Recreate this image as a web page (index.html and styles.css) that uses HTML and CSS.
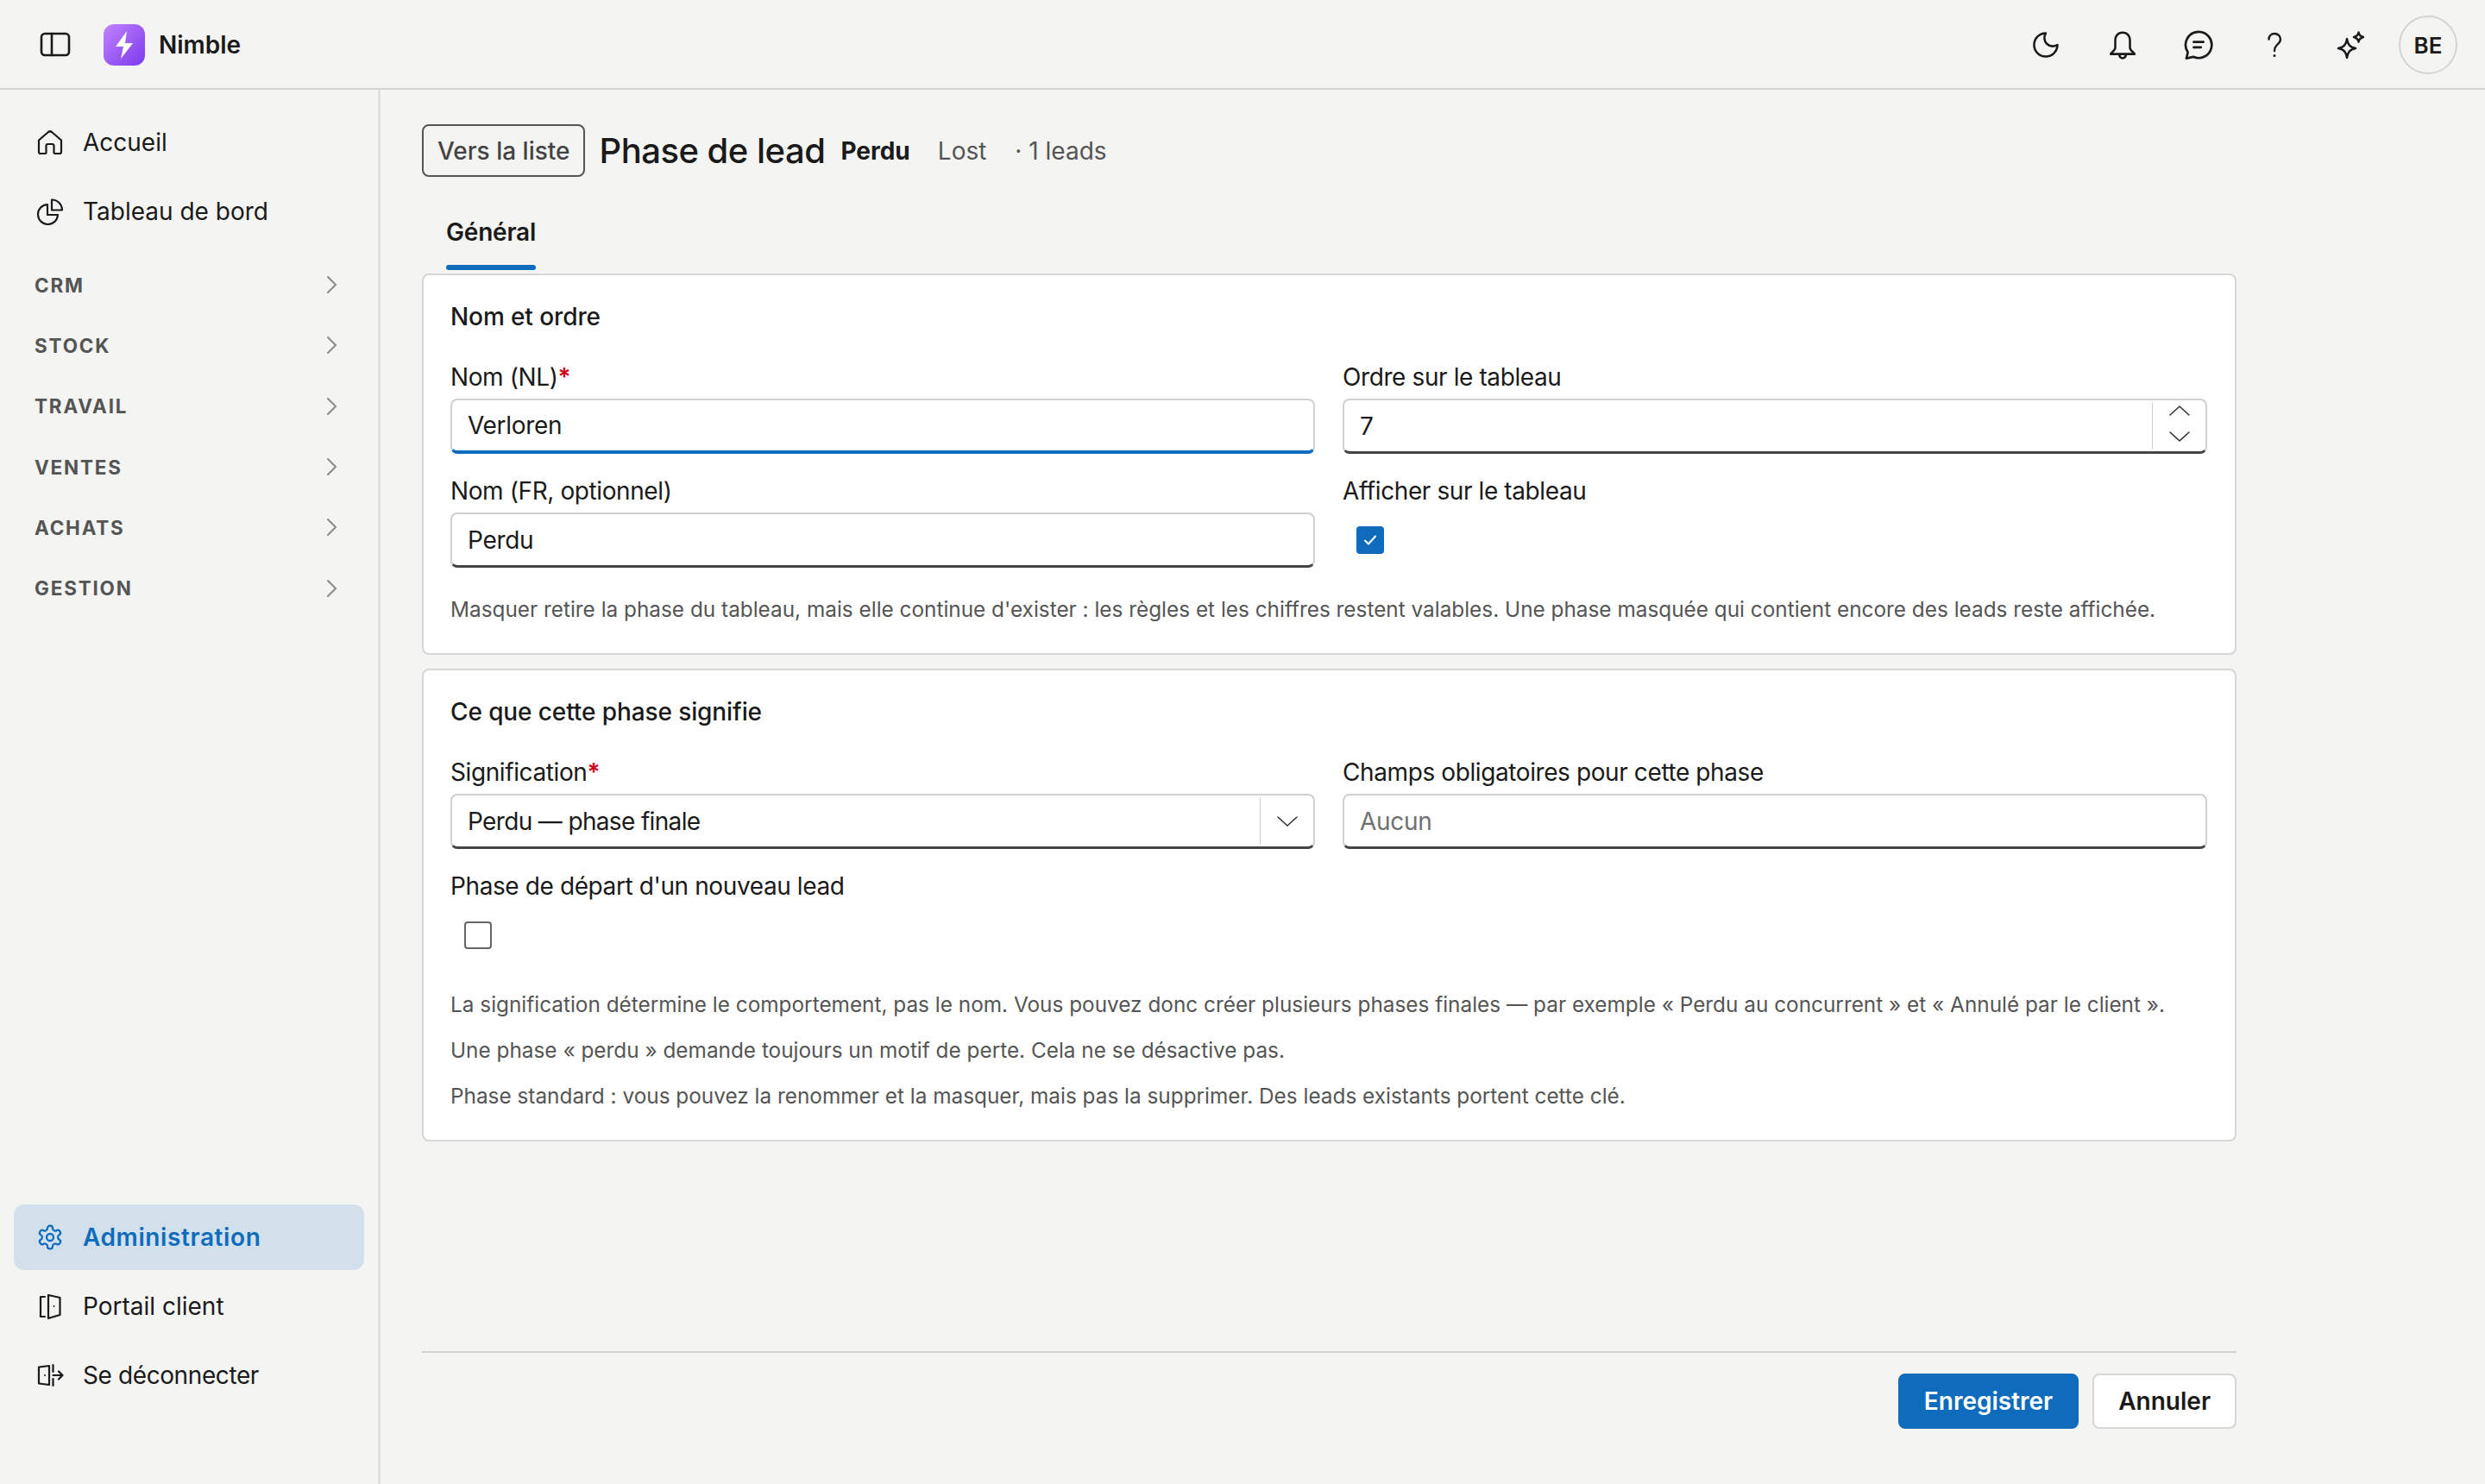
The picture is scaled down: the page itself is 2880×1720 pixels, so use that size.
FILE: index.html
```html
<!DOCTYPE html>
<html lang="fr">
<head>
  <meta charset="UTF-8" />
  <title>Phase de lead - Nimble</title>
  <link rel="stylesheet" href="styles.css">
</head>
<body>
  <header class="topbar">
    <svg class="toggle-icon" width="36" height="30" viewBox="0 0 36 30"><rect x="2" y="2" width="32" height="25" rx="4"/><path d="M14 2v25"/></svg>
    <div class="logo">
      <svg width="48" height="48" viewBox="0 0 48 48"><polygon points="27,8 14,26 23,26 20,40 34,22 25,22" fill="#fff"/></svg>
    </div>
    <span class="brand">Nimble</span>
    <div class="top-actions">
      <button class="icon-btn"><svg width="36" height="36" viewBox="0.7 0 24 24"><path d="M12 3a6.5 6.5 0 0 0 9 9 9 9 0 1 1-9-9Z"/></svg></button>
      <button class="icon-btn"><svg width="34" height="34" viewBox="0 0 32 32"><path d="M16 2.5c-5.2 0-8 4-8 8.500v8c0 3-4 5-5 7h26c-1-2-5-4-5-7v-8c0-4.500-2.800-8.500-8-8.500Z"/><path d="M12.500 27a3.500 3.500 0 0 0 7 0"/></svg></button>
      <button class="icon-btn"><svg width="36" height="36" viewBox="0 0 32 32"><path d="M16 2.500A13.500 13.500 0 1 1 10.500 28.300L3.500 30l1.500-6.500A13.500 13.500 0 0 1 16 2.500Z"/><path d="M11 13h10M11 18.500h7.500"/></svg></button>
      <button class="icon-btn"><svg width="32" height="32" viewBox="0 0 32 32"><path d="M9.500 9.500C9.500 5.500 12.500 3 16 3c4 0 7 2.800 7 6.500 0 3.500-2.500 5-4.500 7-1.500 1.500-2.500 3-2.500 6.500"/><circle class="solid" cx="16" cy="28.500" r="1.500"/></svg></button>
      <button class="icon-btn"><svg width="32" height="32" viewBox="0 0 32 32"><path d="M12 9c1 6.500 3 9.500 10 11-7 1.500-9 4.500-10 11-1-6.500-3-9.500-10-11 7-1.500 9-4.500 10-11Z"/><path d="M25.500 1.500c.5 3 1.500 4.500 5.500 5.500-4 1-5 2.500-5.500 5.500-.5-3-1.500-4.500-5.500-5.500 4-1 5-2.500 5.500-5.500Z"/></svg></button>
      <div class="avatar">BE</div>
    </div>
  </header>

  <div class="layout">
    <aside class="sidebar">
      <nav class="nav-top">
        <a class="nav-item"><svg width="32" height="32" viewBox="0 0 32 32"><path d="M3 13.500 14 4q2-1.500 4 0l11 9.500V27a2 2 0 0 1-2 2h-5.500a1 1 0 0 1-1-1v-8a2 2 0 0 0-2-2h-5a2 2 0 0 0-2 2v8a1 1 0 0 1-1 1H5a2 2 0 0 1-2-2Z"/></svg>Accueil</a>
        <a class="nav-item"><svg width="32" height="32" viewBox="0 0 32 32"><path d="M13 8a11.500 11.500 0 1 0 12 12H13Z"/><path d="M18 2.500A12 12 0 0 1 30 14.500H18Z"/></svg>Tableau de bord</a>
        <div class="nav-groups">
          <div class="nav-group">CRM<svg width="14" height="22" viewBox="0 0 14 22"><path d="m3 2 9 9-9 9"/></svg></div>
          <div class="nav-group">STOCK<svg width="14" height="22" viewBox="0 0 14 22"><path d="m3 2 9 9-9 9"/></svg></div>
          <div class="nav-group">TRAVAIL<svg width="14" height="22" viewBox="0 0 14 22"><path d="m3 2 9 9-9 9"/></svg></div>
          <div class="nav-group">VENTES<svg width="14" height="22" viewBox="0 0 14 22"><path d="m3 2 9 9-9 9"/></svg></div>
          <div class="nav-group">ACHATS<svg width="14" height="22" viewBox="0 0 14 22"><path d="m3 2 9 9-9 9"/></svg></div>
          <div class="nav-group">GESTION<svg width="14" height="22" viewBox="0 0 14 22"><path d="m3 2 9 9-9 9"/></svg></div>
        </div>
      </nav>
      <nav class="nav-bottom">
        <a class="nav-item active"><svg width="32" height="32" viewBox="0 0 24 24"><path d="M12.220 2h-.44a2 2 0 0 0-2 2v.18a2 2 0 0 1-1 1.730l-.43.25a2 2 0 0 1-2 0l-.15-.08a2 2 0 0 0-2.730.73l-.22.38a2 2 0 0 0 .73 2.730l.15.1a2 2 0 0 1 1 1.720v.51a2 2 0 0 1-1 1.740l-.15.09a2 2 0 0 0-.73 2.730l.22.38a2 2 0 0 0 2.730.73l.15-.08a2 2 0 0 1 2 0l.43.25a2 2 0 0 1 1 1.730V20a2 2 0 0 0 2 2h.44a2 2 0 0 0 2-2v-.18a2 2 0 0 1 1-1.730l.43-.25a2 2 0 0 1 2 0l.15.08a2 2 0 0 0 2.730-.73l.22-.39a2 2 0 0 0-.73-2.730l-.15-.08a2 2 0 0 1-1-1.740v-.5a2 2 0 0 1 1-1.740l.15-.09a2 2 0 0 0 .73-2.730l-.22-.38a2 2 0 0 0-2.730-.73l-.15.08a2 2 0 0 1-2 0l-.43-.25a2 2 0 0 1-1-1.730V4a2 2 0 0 0-2-2z"/><circle cx="12" cy="12" r="3"/></svg>Administration</a>
        <a class="nav-item"><svg width="32" height="32" viewBox="0 0 32 32"><path d="M10 5H5v23h5"/><path d="M14 3l13.500 3v20L14 30Z"/><circle class="solid" cx="20.500" cy="16" r="1"/></svg>Portail client</a>
        <a class="nav-item logout"><svg width="32" height="32" viewBox="0 0 32 32"><path d="M15 5 3 6.500v19L15 27Z"/><circle class="solid" cx="10" cy="16" r="1"/><path d="M19.500 4v8M19.500 20v8M19.500 16H30M26 11.500l4.500 4.500-4.500 4.500"/></svg>Se déconnecter</a>
      </nav>
    </aside>

    <main class="content">
      <div class="page-head">
        <a class="back-btn">Vers la liste</a>
        <h1>Phase de lead</h1>
        <strong class="phase-name">Perdu</strong>
        <span class="phase-meta">Lost</span>
        <span class="phase-meta">· 1 leads</span>
      </div>

      <div class="tab">Général<div class="tab-line"></div></div>

      <section class="card">
        <h2>Nom et ordre</h2>
        <div class="form-grid">
          <div class="field">
            <label>Nom (NL)<span class="req">*</span></label>
            <div class="box focused"><input value="Verloren"></div>
          </div>
          <div class="field">
            <label>Ordre sur le tableau</label>
            <div class="box">
              <input value="7">
              <div class="addon spin">
                <svg width="26" height="14" viewBox="0 0 26 14"><path d="m2 12 11-10 11 10"/></svg>
                <svg width="26" height="14" viewBox="0 0 26 14"><path d="m2 2 11 10L24 2"/></svg>
              </div>
            </div>
          </div>
          <div class="field">
            <label>Nom (FR, optionnel)</label>
            <div class="box"><input value="Perdu"></div>
          </div>
          <div class="field">
            <label>Afficher sur le tableau</label>
            <div class="check-row">
              <span class="check checked"><svg width="20" height="20" viewBox="0 0 20 20"><path d="m4 10.500 4 4 8-9"/></svg></span>
            </div>
          </div>
        </div>
        <p class="hint first">Masquer retire la phase du tableau, mais elle continue d'exister : les règles et les chiffres restent valables. Une phase masquée qui contient encore des leads reste affichée.</p>
      </section>

      <section class="card">
        <h2>Ce que cette phase signifie</h2>
        <div class="form-grid">
          <div class="field">
            <label>Signification<span class="req">*</span></label>
            <div class="box">
              <input class="select-value" value="Perdu — phase finale">
              <div class="addon"><svg width="26" height="14" viewBox="0 0 26 14"><path d="m2 2 11 10L24 2"/></svg></div>
            </div>
          </div>
          <div class="field">
            <label>Champs obligatoires pour cette phase</label>
            <div class="box"><input placeholder="Aucun"></div>
          </div>
          <div class="field">
            <label>Phase de départ d'un nouveau lead</label>
            <div class="check-row"><span class="check"></span></div>
          </div>
        </div>
        <p class="hint first">La signification détermine le comportement, pas le nom. Vous pouvez donc créer plusieurs phases finales — par exemple « Perdu au concurrent » et « Annulé par le client ».</p>
        <p class="hint">Une phase « perdu » demande toujours un motif de perte. Cela ne se désactive pas.</p>
        <p class="hint">Phase standard : vous pouvez la renommer et la masquer, mais pas la supprimer. Des leads existants portent cette clé.</p>
      </section>

      <footer class="form-foot">
        <button class="btn primary">Enregistrer</button>
        <button class="btn">Annuler</button>
      </footer>
    </main>
  </div>
</body>
</html>
```

FILE: styles.css
```css
* { box-sizing: border-box; }
html, body { height: 100%; }
body {
  margin: 0;
  display: flex;
  flex-direction: column;
  height: 100vh;
  overflow: hidden;
  background-color: #f4f4f3;
  color: #1a1a1a;
  font-family: Inter, 'Liberation Sans', sans-serif;
  font-size: 28px;
}
svg { fill: none; stroke: currentColor; stroke-width: 2; stroke-linecap: round; stroke-linejoin: round; flex: none; }
svg .solid { fill: currentColor; stroke: none; }

.topbar {
  height: 104px;
  flex: none;
  display: flex;
  align-items: center;
  padding: 2px 32px 0 46px;
  border-bottom: 2px solid #d4d4d2;
}
.toggle-icon { stroke-width: 2.6; margin-right: 38px; }
.logo {
  width: 48px;
  height: 48px;
  border-radius: 12px;
  background: linear-gradient(135deg, #c084fc, #7c3aed);
}
.logo svg { stroke: none; display: block; }
.brand { font-weight: 600; margin-left: 16px; }
.top-actions { margin-left: auto; display: flex; align-items: center; }
.icon-btn {
  width: 88px;
  height: 68px;
  display: flex;
  align-items: center;
  justify-content: center;
  padding: 0;
  border: none;
  background: none;
  color: #1a1a1a;
}
.icon-btn svg { stroke-width: 2.4; }
.icon-btn:first-child svg { stroke-width: 1.7; }
.avatar {
  width: 68px;
  height: 68px;
  margin-left: 12px;
  border: 2px solid #d4d4d2;
  border-radius: 50%;
  display: flex;
  align-items: center;
  justify-content: center;
  font-size: 26px;
  font-weight: 600;
}

.layout { flex: 1; display: flex; min-height: 0; }
.sidebar {
  width: 441px;
  flex: none;
  display: flex;
  flex-direction: column;
  justify-content: space-between;
  padding: 23px 16px 88px 16px;
  border-right: 3px solid #dfe1e3;
}
.nav-item {
  height: 76px;
  margin-bottom: 4px;
  padding-left: 26px;
  display: flex;
  align-items: center;
  gap: 22px;
  border-radius: 12px;
}
.nav-item svg { stroke-width: 2.2; }
.nav-bottom .nav-item:last-child { margin-bottom: 0; }
.nav-item.active {
  background-color: #d2e0ec;
  color: #0f6cbd;
  font-weight: 600;
  letter-spacing: 0.6px;
}
.nav-item.active svg { stroke-width: 1.7; }
.nav-item.logout { letter-spacing: -0.4px; }
.nav-groups { margin-top: 12px; }
.nav-group {
  height: 70.3px;
  padding: 0 31px 0 24px;
  display: flex;
  align-items: center;
  justify-content: space-between;
  font-size: 22.5px;
  font-weight: 700;
  letter-spacing: 1.8px;
  color: #555;
}
.nav-group svg { color: #8a8a8a; }

.content {
  flex: 1;
  min-width: 0;
  display: flex;
  flex-direction: column;
  padding: 40px 288px 64px 48px;
}
.page-head { display: flex; align-items: center; height: 61px; }
.back-btn {
  height: 61px;
  padding: 0 16px;
  display: flex;
  align-items: center;
  border: 2px solid #555;
  border-radius: 8px;
  color: #444;
  font-weight: 500;
}
h1 { margin: 0 18px 0 16px; font-size: 40px; font-weight: 500; letter-spacing: -0.5px; }
.phase-name { font-weight: 700; margin-right: 32px; }
.phase-meta { color: #555; margin-right: 33px; }

.tab { align-self: flex-start; margin: 42px 0 0 28px; line-height: 44px; font-weight: 600; letter-spacing: -0.2px; }
.tab-line { height: 6px; margin-top: 16px; border-radius: 3px; background-color: #0f6cbd; }

.card {
  margin-top: 4px;
  margin-bottom: 12px;
  padding: 25px 32px 31px 31px;
  background-color: #fff;
  border: 2px solid #d6d6d6;
  border-radius: 8px;
}
h2 { margin: 0 0 26px; padding-top: 1px; font-size: 28px; line-height: 44px; font-weight: 500; letter-spacing: -0.1px; height: 44px; }
.form-grid { display: grid; grid-template-columns: 1fr 1fr; gap: 20px 32px; }
label { display: block; line-height: 44px; height: 44px; padding-top: 1px; margin-bottom: 4px; letter-spacing: -0.4px; }
.req { color: #d0021b; font-weight: 600; }
.box {
  height: 64px;
  display: flex;
  background-color: #fff;
  border: 2px solid #d0d0d0;
  border-bottom: 3px solid #444;
  border-radius: 8px;
}
.box.focused { border-bottom: 4px solid #0f6cbd; }
.box input {
  flex: 1;
  min-width: 0;
  padding: 0 18px;
  border: none;
  outline: none;
  background: none;
  font: inherit;
  letter-spacing: -0.3px;
  color: #1a1a1a;
}
.box input.select-value { letter-spacing: -0.65px; }
.box input::placeholder { color: #707070; }
.addon {
  width: 62px;
  margin: 2px 0;
  display: flex;
  flex-direction: column;
  align-items: center;
  justify-content: center;
  border-left: 1px solid #d0d0d0;
}
.addon svg { stroke-width: 1.6; color: #333; }
.spin { gap: 16px; padding-bottom: 5px; }
.check-row { height: 64px; padding-left: 16px; display: flex; align-items: center; }
.check {
  width: 32px;
  height: 32px;
  display: flex;
  align-items: center;
  justify-content: center;
  border: 2px solid #666;
  border-radius: 4px;
}
.check.checked { background-color: #0f6cbd; border-color: #0f6cbd; color: #fff; }
.check svg { stroke-width: 2; }
.hint { margin: 13px 0 0; line-height: 40px; font-size: 24.35px; color: #555; white-space: nowrap; }
.hint.first { margin-top: 28px; }

.form-foot {
  margin-top: auto;
  padding-top: 24px;
  display: flex;
  justify-content: flex-end;
  gap: 16px;
  border-top: 2px solid #d4d4d2;
}
.btn {
  height: 64px;
  padding: 0 28px;
  border: 2px solid #d6d6d6;
  border-radius: 8px;
  background-color: #fff;
  color: #1a1a1a;
  font: inherit;
  font-weight: 600;
}
.btn.primary { background-color: #0f6cbd; border-color: #0f6cbd; color: #fff; }
```
